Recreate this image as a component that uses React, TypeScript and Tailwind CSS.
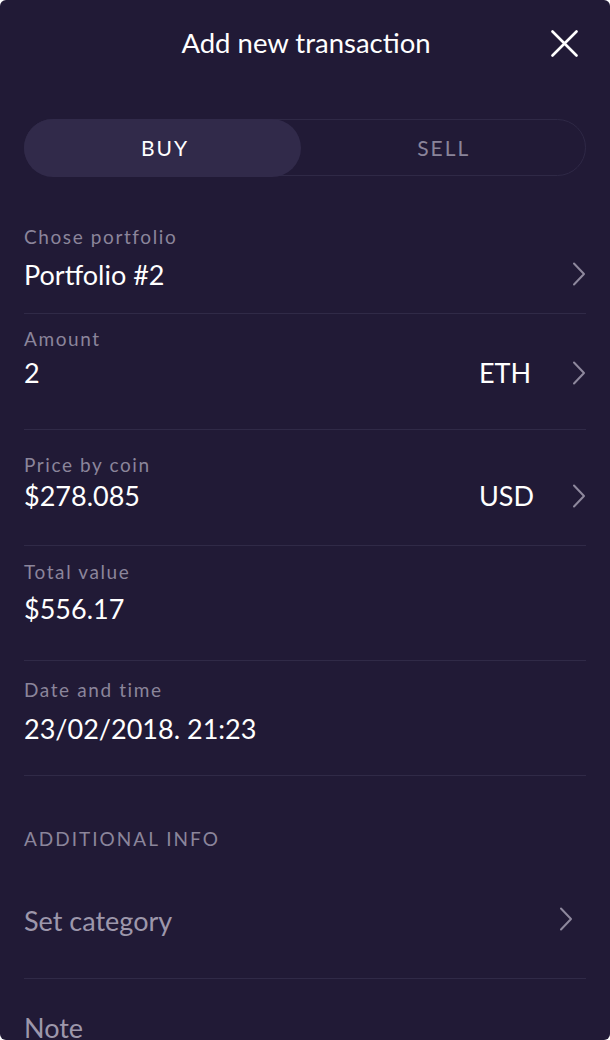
import React from "react";

function Chevron({ className = "" }: { className?: string }) {
  return (
    <svg width="14" height="24" viewBox="0 0 14 24" className={className} fill="none">
      <path d="M2 1.5 L12 12 L2 22.5" stroke="#8e889d" strokeWidth="2" strokeLinecap="round" strokeLinejoin="round" />
    </svg>
  );
}

function Row({
  label,
  value,
  unit,
  chevron,
  pt,
  h,
  gap,
}: {
  label: string;
  value: string;
  unit?: string;
  chevron?: boolean;
  pt: string;
  h: string;
  gap: string;
}) {
  return (
    <div className={`mx-[24px] border-b border-[#302a47] ${h} ${pt} flex items-start`}>
      <div className={`flex flex-col ${gap} flex-1`}>
        <div className="text-[19px] leading-[22px] tracking-[1.6px] text-[#8b859b]">{label}</div>
        <div className="flex items-center">
          <div className="text-[27px] leading-[30px] text-white flex-1">{value}</div>
          {unit && <div className="w-[93px] text-[27px] leading-[30px] text-white">{unit}</div>}
          {chevron && unit && <Chevron />}
        </div>
      </div>
      {chevron && !unit && <Chevron className="mt-[36px]" />}
    </div>
  );
}

export default function App() {
  return (
    <div
      className="w-[610px] h-[1040px] bg-[#211a36] overflow-hidden rounded-[6px]"
      style={{ fontFamily: "Lato, 'Open Sans', sans-serif" }}
    >
      <div className="relative h-[86px] flex items-center justify-center">
        <div className="text-white text-[27.5px] leading-[32px] pl-[2px]">Add new transaction</div>
        <svg className="absolute left-[551px] top-[30px]" width="27" height="27" viewBox="0 0 27 27">
          <path d="M1.5 1.5 L25.5 25.5 M25.5 1.5 L1.5 25.5" stroke="#ffffff" strokeWidth="2.6" strokeLinecap="round" />
        </svg>
      </div>
      <div className="px-[24px] pt-[33px]">
        <div className="h-[57px] rounded-full border-[1.5px] border-[#2f2946] flex">
          <div className="w-[277px] -ml-[1.5px] -my-[1.5px] pl-[6px] rounded-full bg-[#312a4a] flex items-center justify-center text-white text-[21px] tracking-[2px]">
            BUY
          </div>
          <div className="flex-1 flex items-center justify-center pl-[2px] text-[#8a849a] text-[21px] tracking-[2px]">SELL</div>
        </div>
      </div>
      <div className="mt-[24px]">
        <Row label="Chose portfolio" value="Portfolio #2" chevron pt="pt-[26px]" h="h-[114px]" gap="gap-[12px]" />
        <Row label="Amount" value="2" unit="ETH" chevron pt="pt-[14px]" h="h-[116px]" gap="gap-[8px]" />
        <Row label="Price by coin" value="$278.085" unit="USD" chevron pt="pt-[24px]" h="h-[116px]" gap="gap-[5px]" />
        <Row label="Total value" value="$556.17" pt="pt-[15px]" h="h-[115px]" gap="gap-[11px]" />
        <Row label="Date and time" value="23/02/2018. 21:23" pt="pt-[18px]" h="h-[115px]" gap="gap-[13px]" />
      </div>
      <div className="px-[24px] pt-[52px] text-[19px] leading-[22px] tracking-[2px] text-[#8b859b]">ADDITIONAL INFO</div>
      <div className="mx-[24px] mt-[52px] h-[77px] border-b border-[#302a47] flex items-start justify-between">
        <div className="text-[27px] leading-[32px] text-[#9d97ab] pt-[3px]">Set category</div>
        <Chevron className="mr-[13px] mt-[5px]" />
      </div>
      <div className="px-[24px] pt-[33px] text-[27px] leading-[32px] text-[#9d97ab]">Note</div>
    </div>
  );
}
